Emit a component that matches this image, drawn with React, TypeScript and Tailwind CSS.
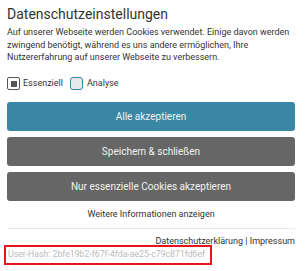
export default function App() {
	return (
		<div className="w-[306px] h-[271px] bg-white px-[7px] pt-[5px] font-['Roboto',sans-serif] text-[#333] overflow-hidden">
			<h2 className="text-[14px] leading-[18px] text-[#333]">Datenschutzeinstellungen</h2>
			<p className="text-[9px] leading-[12.5px] mt-[3px] w-[292px]">
				Auf unserer Webseite werden Cookies verwendet. Einige davon werden zwingend benötigt, während es uns andere ermöglichen, Ihre Nutzererfahrung auf unserer Webseite zu verbessern.
			</p>
			<div className="flex items-center mt-[13px] h-[14px] text-[9px]">
				<span className="w-[13px] h-[13px] border-[1.5px] border-[#555] rounded-[2px] flex items-center justify-center">
					<span className="w-[6px] h-[6px] bg-[#555]" />
				</span>
				<span className="ml-[3px]">Essenziell</span>
				<span className="ml-[7px] w-[13px] h-[13px] border-[1.5px] border-[#3a87a5] bg-[#e6e8ea] rounded-[3px]" />
				<span className="ml-[4px]">Analyse</span>
			</div>
			<div className="flex flex-col gap-[6px] mt-[11px] w-[288px]">
				<button className="h-[29px] rounded-[3px] bg-[#3a87a5] text-[10px] text-[#f2f2f2]">Alle akzeptieren</button>
				<button className="h-[29px] rounded-[3px] bg-[#666] text-[10px] text-[#f2f2f2]">Speichern &amp; schließen</button>
				<button className="h-[29px] rounded-[3px] bg-[#666] text-[10px] text-[#f2f2f2]">Nur essenzielle Cookies akzeptieren</button>
			</div>
			<div className="w-[288px] text-center text-[9px] leading-[12px] mt-[7px]">Weitere Informationen anzeigen</div>
			<div className="w-[288px] border-t border-[#e8e8e8] mt-[8px]" />
			<div className="w-[288px] text-right text-[9px] leading-[10px] mt-[7px]">
				Datenschutzerklärung | Impressum
			</div>
			<div className="-ml-[3px] -mt-px w-[208px] h-[20px] border-2 border-[#e8141b] flex items-center pl-[2px] text-[8.7px] text-[#bbb] whitespace-nowrap">
				User-Hash: 2bfe19b2-f67f-4fda-ae25-c79c871fd6ef
			</div>
		</div>
	)
}
